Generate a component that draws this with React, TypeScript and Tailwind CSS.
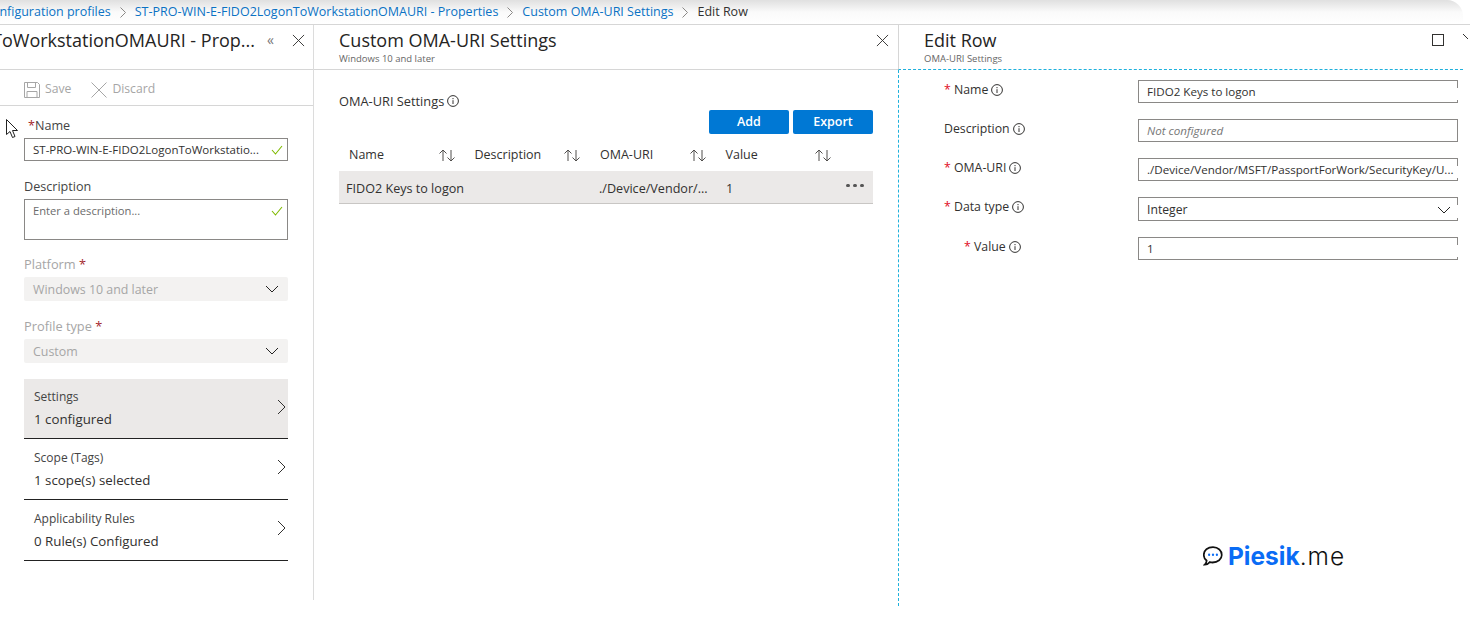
import React from "react";

const Info = () => (
  <svg width="12" height="12" viewBox="0 0 12 12" fill="none" stroke="#323130" strokeWidth="1" className="shrink-0">
    <circle cx="6" cy="6" r="5.4" />
    <path d="M6 5.2V9M6 3v1.2" />
  </svg>
);
const Close = ({ s = 13 }: { s?: number }) => (
  <svg width={s} height={s} viewBox="0 0 14 14" fill="none" stroke="#323130" strokeWidth="1">
    <path d="M1 1l12 12M13 1L1 13" />
  </svg>
);
const Down = () => (
  <svg width="14" height="8" viewBox="0 0 14 8" fill="none" stroke="#252423" strokeWidth="1">
    <path d="M1 1l6 6 6-6" />
  </svg>
);
const Right = () => (
  <svg width="9" height="16" viewBox="0 0 9 16" fill="none" stroke="#323130" strokeWidth="1">
    <path d="M1 1l7 7-7 7" />
  </svg>
);
const Crumb = () => (
  <svg width="6" height="11" viewBox="0 0 6 11" fill="none" stroke="#8a8886" strokeWidth="1" className="shrink-0">
    <path d="M.5.5l5 5-5 5" />
  </svg>
);
const Check = () => (
  <svg width="12" height="10" viewBox="0 0 12 10" fill="none" stroke="#7fba00" strokeWidth="1.1">
    <path d="M1 5l3.5 4L11 1" />
  </svg>
);
const Sort = () => (
  <svg width="18" height="13" viewBox="0 0 18 13" fill="none" stroke="#504e4c" strokeWidth="1">
    <path d="M5 12V1M1.500 4.500L5 1l3.500 3.500M13 1v11M9.500 8.500L13 12l3.500-3.500" />
  </svg>
);
const Star = () => <span className="text-[#e00b1c]">*</span>;

const Tile = ({ title, value, active, h }: { title: string; value: string; active?: boolean; h: string }) => (
  <div className={`flex ${h} items-center justify-between border-b border-[#222] pl-[10px] pr-[2px] ${active ? "bg-[#ebe9e8]" : ""}`}>
    <div className="flex flex-col">
      <span className="text-[12px] leading-[16px] text-[#444]">{title}</span>
      <span className="mt-[5px] text-[13.3px] leading-[18px] text-[#323130]">{value}</span>
    </div>
    <span className="mb-[4px]"><Right /></span>
  </div>
);

const Sel = ({ text }: { text: string }) => (
  <div className="flex h-[24px] items-center justify-between rounded-[2px] bg-[#f3f2f1] px-[9px] text-[12.4px] text-[#a6a6a6]">
    <span className="pt-[2px]">{text}</span>
    <Down />
  </div>
);

const Field = ({ children, cls = "h-[23px] text-[11.6px] text-[#323130]", stubs = "" }: { children: React.ReactNode; cls?: string; stubs?: string }) => (
  <div className={`relative flex w-[320px] items-center justify-between whitespace-nowrap border border-[#8a8886] pl-[8px] pr-[7px] pt-[1px] ${cls} ${stubs}`}>
    {children}
  </div>
);
const STUBS = "border-r-0 before:absolute before:right-0 before:top-0 before:h-[7px] before:w-px before:bg-[#8a8886] after:absolute after:right-0 after:bottom-0 after:h-[2px] after:w-px after:bg-[#8a8886]";

const FormRow = ({ label, req, indent, children }: { label: string; req?: boolean; indent?: boolean; children: React.ReactNode }) => (
  <div className="flex items-start">
    <div className={`flex w-[194px] items-center gap-[3px] pt-[1px] text-[12.3px] leading-[18px] text-[#323130] ${indent ? "pl-[20px]" : ""}`}>
      <span className="whitespace-nowrap">{req && <><Star />&nbsp;</>}{label}</span>
      <Info />
    </div>
    {children}
  </div>
);

const Th = ({ label }: { label: string }) => (
  <div className="flex w-[125.5px] items-center justify-between pr-[19px] text-[12.5px] font-medium text-[#323130]">
    <span>{label}</span>
    <Sort />
  </div>
);

export default function App() {
  return (
    <div className="relative h-[629px] w-[1481px] overflow-hidden bg-white font-['Open_Sans',sans-serif]">
      <div className="flex h-[24px] w-[1463px] items-center gap-[9px] overflow-hidden whitespace-nowrap rounded-tr-[16px] bg-gradient-to-b from-[#e0e0e0] via-[#fafafa] to-white text-[12.5px] text-[#0a72c4]">
        <span className="-ml-[16px]">Configuration profiles</span>
        <Crumb />
        <span>ST-PRO-WIN-E-FIDO2LogonToWorkstationOMAURI - Properties</span>
        <Crumb />
        <span>Custom OMA-URI Settings</span>
        <Crumb />
        <span className="text-[#323130]">Edit Row</span>
      </div>
      <div className="h-px w-[1470px] bg-[#d6d6d6]" />

      <div className="flex h-[581px]">
        {/* Panel 1 */}
        <div className="flex h-[575px] w-[314px] shrink-0 flex-col border-r border-[#dcdcdc]">
          <div className="flex h-[45px] shrink-0 items-start justify-end overflow-hidden whitespace-nowrap border-b border-[#d6d6d6] pr-[8px] pt-[2px]">
            <span className="text-[18px] font-medium text-[#252423]">ST-PRO-WIN-E-FIDO2LogonToWorkstationOMAURI - Prop...</span>
            <span className="ml-[12px] mt-[2px] text-[14px] text-[#777]">«</span>
            <span className="ml-[18px] mt-[7px]"><Close /></span>
          </div>
          <div className="flex h-[36px] shrink-0 items-center border-b border-[#d6d6d6] pl-[24px] pt-[4px] text-[12.2px] text-[#a6a6a6]">
            <svg width="16" height="16" viewBox="0 0 16 16" fill="none" stroke="#a6a6a6" strokeWidth="1">
              <path d="M.5.5h13l2 2v13H.5zM3.500.5v5h8v-5M3 15.500v-6h10v6" />
            </svg>
            <span className="ml-[5px]">Save</span>
            <svg className="ml-[20px]" width="16" height="16" viewBox="0 0 16 16" fill="none" stroke="#a6a6a6" strokeWidth="1">
              <path d="M.5.5l15 15M15.500.5l-15 15" />
            </svg>
            <span className="ml-[5px]">Discard</span>
          </div>
          <div className="flex flex-col pl-[24px] pr-[25px] pt-[11px]">
            <label className="pl-[4px] text-[12.6px] font-medium leading-[18px] text-[#444]"><span className="text-[#a4262c]">*</span>Name</label>
            <div className="mt-[3px] flex h-[23px] items-center justify-between border border-[#8a8886] pl-[8px] pr-[4px] text-[11.5px] text-[#323130]">
              <span className="whitespace-nowrap">ST-PRO-WIN-E-FIDO2LogonToWorkstatio...</span>
              <Check />
            </div>
            <label className="mt-[17px] text-[12.6px] font-medium leading-[18px] text-[#444]">Description</label>
            <div className="mt-[3px] flex h-[41px] items-start justify-between border border-[#8a8886] pl-[8px] pr-[4px] pt-[3px] text-[11.2px] text-[#6b6b6b]">
              <span>Enter a description...</span>
              <span className="mt-[3px]"><Check /></span>
            </div>
            <label className="mt-[15px] text-[12.8px] font-medium leading-[18px] text-[#a6a6a6]">Platform <span className="text-[#a4262c]">*</span></label>
            <div className="mt-[4px]"><Sel text="Windows 10 and later" /></div>
            <label className="mt-[16px] text-[12.8px] font-medium leading-[18px] text-[#a6a6a6]">Profile type <span className="text-[#a4262c]">*</span></label>
            <div className="mt-[4px]"><Sel text="Custom" /></div>
            <div className="mt-[16px] flex flex-col">
              <Tile h="h-[60px]" title="Settings" value="1 configured" active />
              <Tile h="h-[61px]" title="Scope (Tags)" value="1 scope(s) selected" />
              <Tile h="h-[61px]" title="Applicability Rules" value="0 Rule(s) Configured" />
            </div>
          </div>
        </div>

        {/* Panel 2 */}
        <div className="flex w-[584px] shrink-0 flex-col">
          <div className="flex h-[45px] shrink-0 items-start justify-between border-b border-[#d6d6d6] pl-[25px] pr-[9px] pt-[4px]">
            <div className="flex flex-col">
              <span className="text-[18px] font-medium leading-[23px] text-[#252423]">Custom OMA-URI Settings</span>
              <span className="text-[9.500px] leading-[13px] text-[#666]">Windows 10 and later</span>
            </div>
            <span className="mt-[5px]"><Close /></span>
          </div>
          <div className="flex w-[559px] flex-col pl-[25px] pt-[22px]">
            <div className="flex items-center gap-[3px] text-[12.8px] leading-[18px] text-[#323130]">
              <span>OMA-URI Settings</span>
              <Info />
            </div>
            <div className="flex justify-end gap-[4px]">
              <div className="flex h-[24px] w-[80px] items-center justify-center rounded-[2px] bg-[#0078d4] pt-[1px] text-[12.5px] font-semibold text-white">Add</div>
              <div className="flex h-[24px] w-[80px] items-center justify-center rounded-[2px] bg-[#0078d4] pt-[1px] text-[12.5px] font-semibold text-white">Export</div>
            </div>
            <div className="mt-[9px] flex h-[28px] items-center pb-[4px] pl-[10px]">
              <Th label="Name" />
              <Th label="Description" />
              <Th label="OMA-URI" />
              <Th label="Value" />
            </div>
            <div className="flex h-[33px] items-center border-b border-[#c8c6c4] bg-[#ebe9e8] pt-[4px] text-[12.6px] text-[#323130]">
              <span className="w-[260px] shrink-0 whitespace-nowrap pl-[7px]">FIDO2 Keys to logon</span>
              <span className="w-[127px] shrink-0 whitespace-nowrap">./Device/Vendor/...</span>
              <span className="flex-1">1</span>
              <div className="mb-[8px] mr-[9px] flex gap-[3px]">
                <i className="block h-[3px] w-[4px] rounded-full bg-[#555]" />
                <i className="block h-[3px] w-[4px] rounded-full bg-[#555]" />
                <i className="block h-[3px] w-[4px] rounded-full bg-[#555]" />
              </div>
            </div>
          </div>
        </div>

        {/* Panel 3 */}
        <div className="flex w-[565px] shrink-0 flex-col">
          <div className="flex h-[45px] shrink-0 items-start justify-between border-b border-l border-dashed border-b-[#1fb0dc] border-l-[#d6d6d6] pl-[25px] pt-[4px] [border-left-style:solid]">
            <div className="flex flex-col">
              <span className="text-[18px] font-medium leading-[23px] text-[#252423]">Edit Row</span>
              <span className="text-[9.500px] leading-[13px] text-[#666]">OMA-URI Settings</span>
            </div>
            <div className="-mr-[5px] mt-[5px] flex items-start">
              <div className="h-[12px] w-[12px] border border-[#323130]" />
              <svg className="ml-[19px]" width="5" height="5" viewBox="0 0 5 5" fill="none" stroke="#323130" strokeWidth="1">
                <path d="M0 0l5 5" />
              </svg>
            </div>
          </div>
          <div className="flex flex-1 flex-col gap-[16px] border-l border-dashed border-[#1fb0dc] pl-[45px] pt-[10px]">
            <FormRow label="Name" req><Field stubs={STUBS}>FIDO2 Keys to logon</Field></FormRow>
            <FormRow label="Description"><Field cls="h-[23px] text-[11.6px] italic text-[#777]">Not configured</Field></FormRow>
            <FormRow label="OMA-URI" req><Field stubs={STUBS}>./Device/Vendor/MSFT/PassportForWork/SecurityKey/U...</Field></FormRow>
            <FormRow label="Data type" req><Field cls="h-[24px] text-[12.2px] text-[#323130]" stubs={STUBS}><span className="pt-[1px]">Integer</span> <Down /></Field></FormRow>
            <FormRow label="Value" req indent><Field stubs={STUBS}>1</Field></FormRow>
          </div>
        </div>
      </div>

      {/* Mouse cursor overlay */}
      <svg className="absolute left-[6px] top-[119px]" width="14" height="20" viewBox="0 0 14 20" fill="white" stroke="#222" strokeWidth="1">
        <path d="M.5.5v15l3.500-3 2.500 6 2.500-1-2.500-6h5z" />
      </svg>

      {/* Watermark */}
      <div className="absolute left-[1203px] top-[541px] flex items-center gap-[5px] font-['Inter',sans-serif] text-[24.500px] leading-[30px]">
        <svg width="20" height="20" viewBox="1 2 18 16" fill="none" preserveAspectRatio="none">
          <path d="M10 2.900c-4.800 0-8.300 2.600-8.300 6.200 0 2 1 3.500 2.600 4.600-.1 1.300-.8 2.500-1.700 3.200 1.900 0 3.400-.8 4.500-2 .9.200 1.700.3 2.500.3 4.800 0 8.300-2.800 8.300-6.100S14.800 2.900 10 2.900z" stroke="#111" strokeWidth="1.500" />
          <circle cx="6.500" cy="9" r="1" fill="#0a6cf5" /><circle cx="10" cy="9" r="1" fill="#0a6cf5" /><circle cx="13.500" cy="9" r="1" fill="#0a6cf5" />
        </svg>
        <span><span className="font-bold text-[#0a6cf5]">Piesik</span><span className="font-light tracking-[1px] text-[#111]">.me</span></span>
      </div>
    </div>
  );
}
